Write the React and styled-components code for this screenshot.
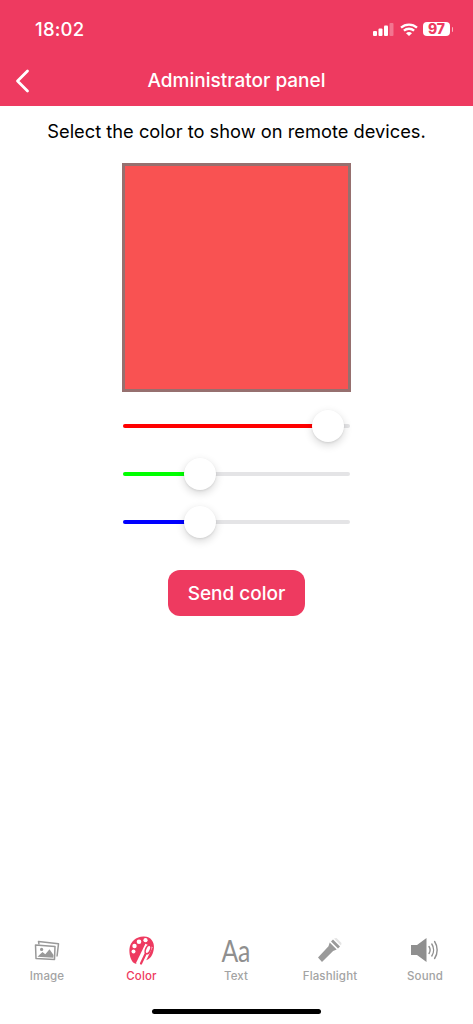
import React from "react";
import styled, { createGlobalStyle } from "styled-components";

const PINK = "#EE3A60";
const GRAY = "#A3A3A3";

const GlobalStyle = createGlobalStyle`
    html, body {
        margin: 0;
        padding: 0;
        background: #fff;
    }
    * {
        box-sizing: border-box;
    }
`;

const Page = styled.div`
    width: 473px;
    height: 1024px;
    display: flex;
    flex-direction: column;
    overflow: hidden;
    background: #fff;
    font-family: "Inter", "Liberation Sans", sans-serif;
`;

const Header = styled.header`
    height: 106px;
    flex: none;
    background: ${PINK};
    color: #fff;
    display: flex;
    flex-direction: column;
`;

const StatusBar = styled.div`
    height: 58px;
    padding: 0 23px 0 35px;
    display: flex;
    align-items: center;
    justify-content: space-between;
`;

const Clock = styled.span`
    font-size: 18.5px;
    font-weight: 500;
    letter-spacing: 0.2px;
`;

const StatusIcons = styled.div`
    display: flex;
    align-items: center;
    gap: 5.5px;
`;

const Battery = styled.div`
    width: 27px;
    height: 14px;
    border-radius: 4px;
    background: #fff;
    color: ${PINK};
    font-size: 14px;
    font-weight: 800;
    line-height: 14px;
    text-align: center;
    position: relative;
    &::after {
        content: "";
        position: absolute;
        right: -3px;
        top: 4.5px;
        width: 1.5px;
        height: 5px;
        border-radius: 0 2px 2px 0;
        background: rgba(255, 255, 255, 0.6);
    }
`;

const NavBar = styled.div`
    height: 45px;
    padding: 0 15px;
    display: grid;
    grid-template-columns: 40px 1fr 40px;
    align-items: center;
`;

const Title = styled.h1`
    margin: 0;
    font-size: 19px;
    font-weight: 500;
    text-align: center;
`;

const Content = styled.main`
    flex: 1;
    padding-top: 14px;
    display: flex;
    flex-direction: column;
    align-items: center;
`;

const Prompt = styled.p`
    margin: 0;
    font-size: 18.3px;
    line-height: 22px;
    color: #000;
    white-space: nowrap;
`;

const Swatch = styled.div`
    width: 229px;
    height: 229px;
    margin-top: 21px;
    background: ${(p) => p.$color};
    border: 3px solid #96706F;
`;

const Sliders = styled.div`
    width: 227px;
    margin-top: 10px;
    display: flex;
    flex-direction: column;
`;

const SliderRow = styled.div`
    height: 48px;
    display: flex;
    align-items: center;
    position: relative;
`;

const Track = styled.div`
    width: 100%;
    height: 4px;
    border-radius: 2px;
    background: #E4E4E6;
    overflow: hidden;
`;

const Fill = styled.div`
    height: 100%;
    background: ${(p) => p.$color};
`;

const Thumb = styled.div`
    position: absolute;
    top: 8px;
    width: 32px;
    height: 32px;
    margin-left: -16px;
    border-radius: 50%;
    background: #fff;
    box-shadow: 0 3px 8px rgba(0, 0, 0, 0.16), 0 1px 2px rgba(0, 0, 0, 0.08);
`;

const SendButton = styled.button`
    width: 137px;
    height: 46px;
    margin-top: 24px;
    border: none;
    border-radius: 12px;
    background: ${PINK};
    color: #fff;
    font-family: inherit;
    font-size: 19px;
    font-weight: 500;
`;

const TabBar = styled.nav`
    height: 65px;
    flex: none;
    padding-top: 5px;
    display: grid;
    grid-template-columns: 94px 95px 94px 94px 96px;
`;

const Tab = styled.div`
    display: flex;
    flex-direction: column;
    align-items: center;
    color: ${(p) => (p.$active ? PINK : GRAY)};
`;

const TabIcon = styled.div`
    height: 32px;
    display: flex;
    align-items: center;
    justify-content: center;
`;

const TextGlyph = styled.span`
    font-family: "Lato", "Liberation Sans", sans-serif;
    font-weight: 400;
    font-size: 31px;
    line-height: 32px;
    letter-spacing: -0.5px;
    color: #8F8F8F;
    transform: scaleX(0.8);
`;

const TabLabel = styled.span`
    margin-top: 3px;
    font-size: 11.5px;
    line-height: 14px;
    font-weight: 500;
    letter-spacing: 0.15px;
`;

const HomeArea = styled.div`
    height: 30px;
    flex: none;
    padding-top: 15px;
    display: flex;
    justify-content: center;
    align-items: flex-start;
`;

const HomeIndicator = styled.div`
    width: 169px;
    height: 5px;
    border-radius: 3px;
    background: #000;
`;

function SignalIcon() {
    return (
        <svg width="21" height="13" viewBox="0 0 21 13">
            <rect x="0" y="8" width="4" height="5" rx="1" fill="#fff" />
            <rect x="5.500" y="5.500" width="4" height="7.500" rx="1" fill="#fff" />
            <rect x="11" y="2.500" width="4" height="10.500" rx="1" fill="#fff" />
            <rect x="16.500" y="0" width="4" height="13" rx="1" fill="#fff" opacity="0.3" />
        </svg>
    );
}

function WifiIcon() {
    return (
        <svg width="18" height="13" viewBox="0 0 18 13" fill="none" stroke="#fff" strokeWidth="2.300">
            <path d="M1 4.600C5.500.5 12.500.5 17 4.600" />
            <path d="M3.900 7.700c2.900-2.600 7.300-2.600 10.200 0" />
            <path d="M9 13 6 10.200c1.700-1.500 4.300-1.500 6 0Z" fill="#fff" stroke="none" />
        </svg>
    );
}

function BackIcon() {
    return (
        <svg width="16" height="24" viewBox="0 0 16 24" fill="none" stroke="#fff" strokeWidth="2.800" strokeLinecap="round" strokeLinejoin="round">
            <path d="M12.500 2 2.500 12l10 10" />
        </svg>
    );
}

function ImageIcon() {
    return (
        <svg width="26" height="21" viewBox="0 0 26 21" fill="none" stroke="#999" strokeWidth="1.500" strokeLinejoin="round">
            <path d="M5 4.500 4.500 1.500 24.500 3.800 23 16.500" />
            <path d="M1.500 5 21 6.500 20.500 19.500 2 18.500Z" fill="#fff" />
            <path d="M3.500 16.800 8.500 12l2.800 2.200 4.200-5 4 5.800-.1 2.800Z" fill="#999" stroke="none" />
            <circle cx="7.600" cy="9.400" r="1.600" fill="#999" stroke="none" />
        </svg>
    );
}

function PaletteIcon() {
    return (
        <svg width="26" height="29" viewBox="0 0 26 29">
            <path
                d="M15 .5C7.500.2 1.300 5.500.5 12.500c-.6 5.500 1.200 12 4.500 14.500 2.800 2 5-1 7.500-2.500 5 .5 9-1.500 11-6.500 1.800-4.500 2.200-10-.5-13.500C21.500 2 18.500.6 15 .5Z"
                fill={PINK}
            />
            <path d="M20 9.500 10.500 29" stroke="#fff" strokeWidth="8" fill="none" />
            <circle cx="10" cy="5.700" r="2.300" fill="#fff" />
            <circle cx="16.500" cy="4.200" r="2.100" fill="#fff" />
            <circle cx="5.500" cy="10" r="2.200" fill="#fff" />
            <circle cx="4.500" cy="15.500" r="2" fill="#fff" />
            <ellipse cx="19" cy="13.500" rx="2.400" ry="4.500" transform="rotate(22 19 13.500)" fill="none" stroke={PINK} strokeWidth="1.500" />
            <path d="M16.500 18 12 27.500" stroke={PINK} strokeWidth="2.200" strokeLinecap="round" fill="none" />
        </svg>
    );
}

function FlashlightIcon() {
    return (
        <svg width="24" height="24" viewBox="0 0 24 24">
            <path d="M0 19.500 10.500 8.200l1.200-3.700 7 7-3.600 1.400L4 24Z" fill="#9A9A9A" />
            <path d="M13 3.500 15 1.500l7 7-2 2Z" fill="#9A9A9A" />
            <path d="M16 .5 18.500 0 23.500 5l-.5 2.500Z" fill="#E4E4E4" />
        </svg>
    );
}

function SoundIcon() {
    return (
        <svg width="28" height="24" viewBox="0 0 28 24" fill="none" stroke="#8F8F8F" strokeLinecap="round">
            <path d="M0 7h6l9.500-7v24L6 17H0Z" fill="#8F8F8F" stroke="none" />
            <path d="M18 8.500c1.300 2 1.300 5 0 7" strokeWidth="1.400" />
            <path d="M20.800 6c2.300 3.500 2.300 8.500 0 12" strokeWidth="1.400" />
            <path d="M23.600 3.500c3.400 5 3.400 12 0 17" strokeWidth="1.400" />
        </svg>
    );
}

const sliders = [
    { color: "#FF0000", percent: 90.3 },
    { color: "#00FF00", percent: 34 },
    { color: "#0000FF", percent: 34 },
];

const tabs = [
    { label: "Image", icon: <ImageIcon /> },
    { label: "Color", icon: <PaletteIcon />, active: true },
    { label: "Text", icon: <TextGlyph>Aa</TextGlyph> },
    { label: "Flashlight", icon: <FlashlightIcon /> },
    { label: "Sound", icon: <SoundIcon /> },
];

function App() {
    return (
        <Page>
            <GlobalStyle />
            <Header>
                <StatusBar>
                    <Clock>18:02</Clock>
                    <StatusIcons>
                        <SignalIcon />
                        <WifiIcon />
                        <Battery>97</Battery>
                    </StatusIcons>
                </StatusBar>
                <NavBar>
                    <BackIcon />
                    <Title>Administrator panel</Title>
                </NavBar>
            </Header>
            <Content>
                <Prompt>Select the color to show on remote devices.</Prompt>
                <Swatch $color="#F95252" />
                <Sliders>
                    {sliders.map((s) => (
                        <SliderRow key={s.color}>
                            <Track>
                                <Fill $color={s.color} style={{ width: `${s.percent}%` }} />
                            </Track>
                            <Thumb style={{ left: `${s.percent}%` }} />
                        </SliderRow>
                    ))}
                </Sliders>
                <SendButton>Send color</SendButton>
            </Content>
            <TabBar>
                {tabs.map((t) => (
                    <Tab key={t.label} $active={t.active}>
                        <TabIcon>{t.icon}</TabIcon>
                        <TabLabel>{t.label}</TabLabel>
                    </Tab>
                ))}
            </TabBar>
            <HomeArea>
                <HomeIndicator />
            </HomeArea>
        </Page>
    );
}

export default App;
